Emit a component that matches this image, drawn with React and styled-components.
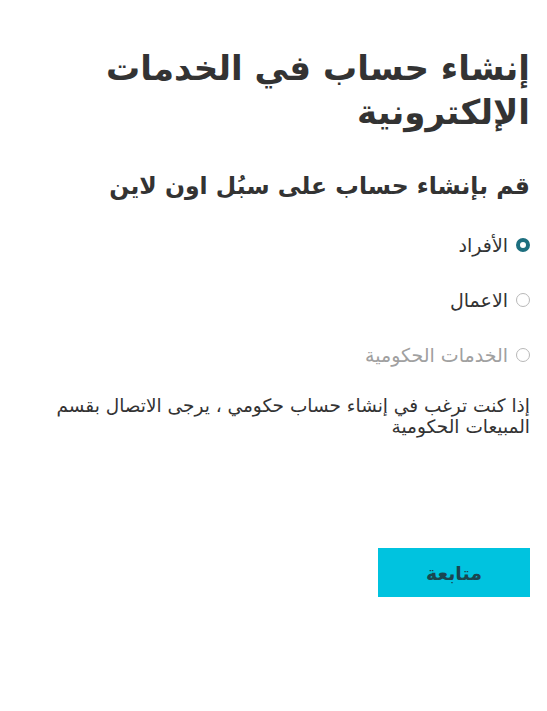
import React, { useState } from 'react';
import styled, { createGlobalStyle } from 'styled-components';

const GlobalStyle = createGlobalStyle`
  body {
    margin: 0;
    background: #ffffff;
    font-family: "DejaVu Sans", "Noto Sans", sans-serif;
  }
`;

const Page = styled.div`
  direction: rtl;
  padding: 46px 17px 40px 17px;
  color: #333333;
`;

const Title = styled.h1`
  margin: 0 0 37px;
  font-size: 34px;
  line-height: 44px;
  font-weight: 700;
  color: #333333;
`;

const SubTitle = styled.h2`
  margin: 0 0 33px;
  font-size: 23.5px;
  line-height: 30px;
  font-weight: 700;
  color: #333333;
`;

const RadioList = styled.div`
  display: flex;
  flex-direction: column;
  gap: 33px;
`;

const RadioRow = styled.label`
  display: flex;
  align-items: center;
  gap: 8px;
  font-size: 19px;
  line-height: 22px;
  color: ${(p) => (p.$disabled ? '#a0a0a0' : '#333333')};
  cursor: ${(p) => (p.$disabled ? 'default' : 'pointer')};
`;

const Dot = styled.span`
  width: 14px;
  height: 14px;
  box-sizing: border-box;
  border-radius: 50%;
  border: ${(p) => (p.$checked ? '4px solid #1d6f7f' : '1px solid #b8b8b8')};
  background: #ffffff;
  flex-shrink: 0;
`;

const Note = styled.p`
  margin: 29px 0 0;
  font-size: 18.5px;
  line-height: 21px;
  color: #333333;
`;

const Actions = styled.div`
  display: flex;
  margin-top: 111px;
`;

const Button = styled.button`
  width: 152px;
  height: 49px;
  border: none;
  background: #00c3df;
  color: #1a4650;
  font-family: inherit;
  font-size: 19px;
  font-weight: 700;
  cursor: pointer;
`;

const options = [
  { id: 'ind', label: 'الأفراد' },
  { id: 'biz', label: 'الاعمال' },
  { id: 'gov', label: 'الخدمات الحكومية', disabled: true },
];

export default function App() {
  const [value, setValue] = useState('ind');
  return (
    <>
      <GlobalStyle />
      <Page>
        <Title>إنشاء حساب في الخدمات الإلكترونية</Title>
        <SubTitle>قم بإنشاء حساب على سبُل اون لاين</SubTitle>
        <RadioList>
          {options.map((o) => (
            <RadioRow
              key={o.id}
              $disabled={o.disabled}
              onClick={() => !o.disabled && setValue(o.id)}
            >
              <Dot $checked={value === o.id} />
              {o.label}
            </RadioRow>
          ))}
        </RadioList>
        <Note>
          إذا كنت ترغب في إنشاء حساب حكومي ، يرجى الاتصال بقسم المبيعات الحكومية
        </Note>
        <Actions>
          <Button>متابعة</Button>
        </Actions>
      </Page>
    </>
  );
}
